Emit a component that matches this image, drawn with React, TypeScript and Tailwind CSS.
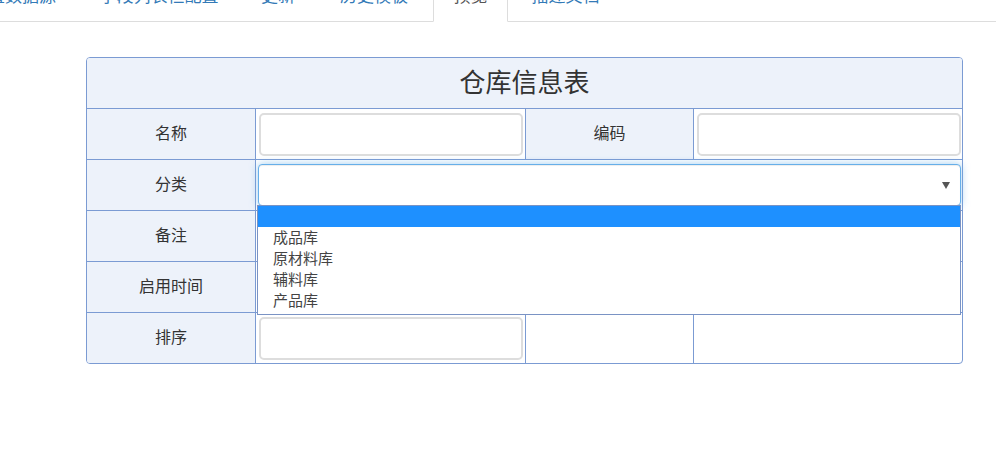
import React from 'react';

const FONT = { fontFamily: '"Noto Sans CJK SC", "Noto Sans", sans-serif' };

const tabs = [
  { label: '设置数据源', w: 'w-[127px]' },
  { label: '字段列表栏配置', w: 'w-[160px]' },
  { label: '更新', w: 'w-[74px]' },
  { label: '历史模板', w: 'w-[114px]' },
  { label: '预览', w: 'w-[75px]', active: true },
  { label: '描述文档', w: 'w-[111px]' },
];

const options = ['', '成品库', '原材料库', '辅料库', '产品库'];

function Label({ text, last }: { text: string; last?: boolean }) {
  return (
    <div
      className={`flex items-center justify-center border-r border-[#7b9bd3] bg-[#edf2fa] pb-[4px] text-[16px] text-[#333] ${
        last ? 'h-[50px] rounded-bl-[3px]' : 'h-[51px] border-b'
      }`}
    >
      {text}
    </div>
  );
}

function TextInput() {
  return <div className="h-[43px] w-full rounded-[5px] border-2 border-[#ddd] bg-white" />;
}

export default function App() {
  return (
    <div className="min-h-[449px] w-[996px] overflow-hidden bg-white" style={FONT}>
      {/* 顶部标签页 */}
      <div className="mt-[-22px] flex border-b border-[#ddd]">
        <div className="ml-[-50px] flex gap-[2px]">
          {tabs.map((t) => (
            <div
              key={t.label}
              className={`${t.w} mb-[-1px] shrink-0 rounded-t-[4px] border pt-[6px] pb-[16px] text-center text-[17px] leading-[20px] ${
                t.active
                  ? 'border-[#ddd] border-b-white bg-white text-[#555]'
                  : 'border-transparent text-[#337ab7]'
              }`}
            >
              {t.label}
            </div>
          ))}
        </div>
      </div>

      {/* 仓库信息表 */}
      <div className="ml-[86px] mt-[35px] w-[877px] rounded-[4px] border border-[#7b9bd3]">
        <div className="grid grid-cols-[169px_270px_168px_1fr]">
          <div className="col-span-4 flex h-[51px] items-center justify-center rounded-t-[3px] border-b border-[#7b9bd3] bg-[#edf2fa] pb-[6px] text-[26px] text-[#333]">
            仓库信息表
          </div>

          <Label text="名称" />
          <div className="flex h-[51px] items-center border-r border-b border-[#7b9bd3] pl-[3px] pr-[2px]">
            <TextInput />
          </div>
          <Label text="编码" />
          <div className="flex h-[51px] items-center border-b border-[#7b9bd3] pl-[3px] pr-[1px]">
            <TextInput />
          </div>

          <Label text="分类" />
          <div className="col-span-3 h-[51px] border-b border-[#7b9bd3] pt-[4px] pl-[2px] pr-[1px]">
            <div className="relative">
              <div className="flex h-[42px] items-center justify-end rounded-[4px] border border-[#66afe9] bg-white pr-[10px] shadow-[inset_0_1px_1px_rgba(0,0,0,0.075),0_0_8px_rgba(102,175,233,0.6)]">
                <svg width="8" height="7" viewBox="0 0 8 7">
                  <polygon points="0,0 8,0 4,7" fill="#555" />
                </svg>
              </div>
              {/* 下拉选项 */}
              <div className="absolute left-[-1px] top-[41px] z-10 w-[704px] border border-[#7a93c4] bg-white pb-[3px]">
                {options.map((o, i) => (
                  <div
                    key={i}
                    className={`flex h-[21px] items-start pl-[15px] text-[15px] leading-[19px] text-[#444] ${
                      i === 0 ? 'bg-[#1e90ff]' : ''
                    }`}
                  >
                    {o}
                  </div>
                ))}
              </div>
            </div>
          </div>

          <Label text="备注" />
          <div className="col-span-3 flex h-[51px] items-center border-b border-[#7b9bd3] pl-[3px] pr-[1px]">
            <TextInput />
          </div>

          <Label text="启用时间" />
          <div className="col-span-3 flex h-[51px] items-center border-b border-[#7b9bd3] pl-[3px] pr-[1px]">
            <TextInput />
          </div>

          <Label text="排序" last />
          <div className="flex h-[50px] items-center border-r border-[#7b9bd3] pl-[3px] pr-[2px]">
            <TextInput />
          </div>
          <div className="h-[50px] border-r border-[#7b9bd3]" />
          <div className="h-[50px]" />
        </div>
      </div>
    </div>
  );
}
